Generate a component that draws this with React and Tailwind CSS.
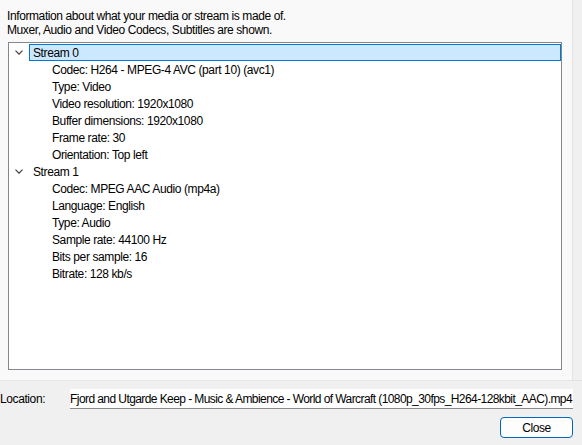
import React from "react";

const font = { fontFamily: '"Liberation Sans", Arial, sans-serif' };

function Chevron() {
  return (
    <svg width="8" height="5" viewBox="0 0 8 5" className="shrink-0">
      <path d="M0.5 0.6 L4 4.1 L7.5 0.6" fill="none" stroke="#3c3c3c" strokeWidth="1.2" />
    </svg>
  );
}

const streams = [
  {
    name: "Stream 0",
    selected: true,
    items: [
      "Codec: H264 - MPEG-4 AVC (part 10) (avc1)",
      "Type: Video",
      "Video resolution: 1920x1080",
      "Buffer dimensions: 1920x1080",
      "Frame rate: 30",
      "Orientation: Top left",
    ],
  },
  {
    name: "Stream 1",
    selected: false,
    items: [
      "Codec: MPEG AAC Audio (mp4a)",
      "Language: English",
      "Type: Audio",
      "Sample rate: 44100 Hz",
      "Bits per sample: 16",
      "Bitrate: 128 kb/s",
    ],
  },
];

export default function App() {
  return (
    <div className="w-[582px] h-[445px] bg-[#f0f0f0] flex flex-col text-[12px] tracking-[-0.4px] text-black overflow-hidden" style={font}>
      {/* panneau du haut */}
      <div className="flex h-[381px] shrink-0">
        <div className="flex-1 bg-[#f9f9f9] border-b border-[#e5e5e5] flex flex-col pt-[9px] pl-[7px] pr-[10px]">
          <p className="leading-[14px]">Information about what your media or stream is made of.</p>
          <p className="leading-[14px]">Muxer, Audio and Video Codecs, Subtitles are shown.</p>
          <div className="mt-[5px] ml-[1px] h-[328px] bg-white border border-[#828790] pt-[1px]">
            {streams.map((s) => (
              <div key={s.name}>
                <div className="h-[17px] flex items-center">
                  <div className="w-[20px] shrink-0 flex pl-[6px]">
                    <Chevron />
                  </div>
                  <div
                    className={
                      s.selected
                        ? "flex-1 h-[17px] flex items-center pl-[3px] bg-[#cce8ff] border border-[#0078d7]"
                        : "flex-1 h-[17px] flex items-center pl-[4px]"
                    }
                  >
                    {s.name}
                  </div>
                </div>
                {s.items.map((it) => (
                  <div key={it} className="h-[17px] flex items-center pl-[43px]">
                    {it}
                  </div>
                ))}
              </div>
            ))}
          </div>
        </div>
        <div className="w-[10px] border-l border-[#e3e3e3] border-b bg-[#f0f0f0]" />
      </div>

      {/* emplacement */}
      <div className="flex items-center mt-[8px] h-[20px]">
        <span className="w-[70px] shrink-0">Location:</span>
        <div className="w-[503px] h-[20px] bg-white border-b border-[#8a8a8a] overflow-hidden flex items-center justify-end whitespace-nowrap pr-[1px] tracking-[-0.58px]">
          Fjord and Utgarde Keep - Music &amp; Ambience - World of Warcraft (1080p_30fps_H264-128kbit_AAC).mp4
        </div>
      </div>

      <div className="flex justify-end pr-[9px] mt-[8px]">
        <button className="w-[73px] h-[21px] bg-[#fdfdfd] border border-[#0067c0] rounded-[4px] flex items-center justify-center">
          Close
        </button>
      </div>
    </div>
  );
}
